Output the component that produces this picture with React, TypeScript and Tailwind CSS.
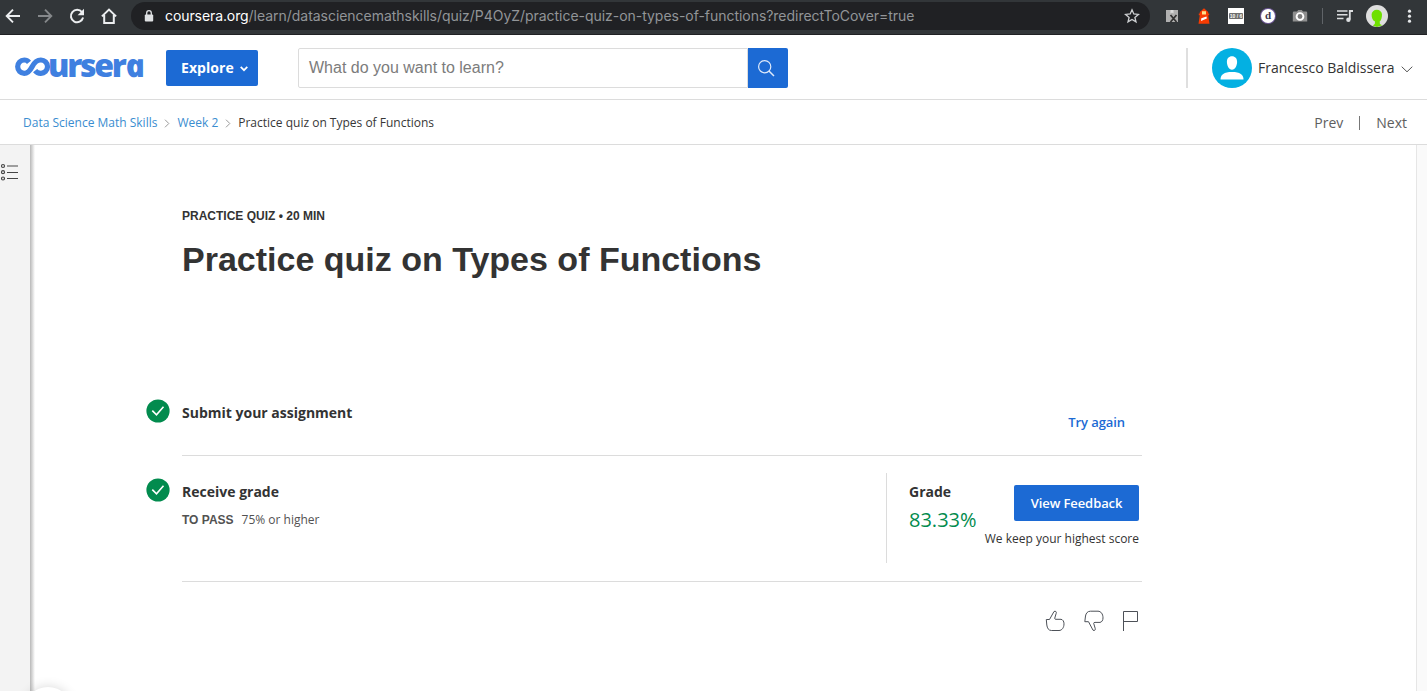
import type { ReactNode } from "react";

const UI = "font-['Open_Sans',sans-serif]";

function Check() {
  return (
    <svg className="block h-6 w-6 shrink-0" viewBox="0 0 24 24">
      <circle cx="12" cy="12" r="11.6" fill="#028b4e" />
      <path d="M6.3 11.6l4.2 4.2 7-8" fill="none" stroke="#fff" strokeWidth="1.6" />
    </svg>
  );
}

function Logo() {
  return (
    <div className="flex h-[26px] w-[128px] shrink-0 items-start text-[#3f80e0]">
      <svg className="mt-[3px] block h-5 w-[37px] shrink-0" viewBox="0 0 37 20">
        <path
          d="M14 5.300C12.700 3.700 11.100 3 9.200 3A6.500 6.500 0 0 0 2.700 9.700a6.500 6.500 0 0 0 6.500 6.600c3.800 0 5.800-2.600 7.900-6.600 2.100-4.100 4.400-6.700 8.700-6.700a6.600 6.600 0 0 1 6.700 6.700 6.600 6.600 0 0 1-6.700 6.600c-2.600 0-4.400-.9-5.700-2.600"
          fill="none"
          stroke="currentColor"
          strokeWidth="5.200"
        />
      </svg>
      <div className="-mt-[11px] -ml-[4px] flex font-['Open_Sans',sans-serif] text-[32px] leading-[44px] font-extrabold tracking-[-2.250px]">
        <span>urser</span>
        <span className="inline-block skew-x-[12deg] italic">a</span>
      </div>
    </div>
  );
}

function Icon({ w = 16, children }: { w?: number; children: ReactNode }) {
  return (
    <svg className="block shrink-0" width={w} height={w} viewBox={`0 0 ${w} ${w}`} fill="none">
      {children}
    </svg>
  );
}

function BrowserBar() {
  return (
    <div className="flex h-[35px] shrink-0 items-start border-b border-[#202124] bg-[#323639]">
      <div className="flex h-8 w-[131px] items-center gap-4 pl-[5px]">
        <Icon>
          <path d="M15 8H2M8 1.7L1.7 8 8 14.3" stroke="#eceef0" strokeWidth="1.9" />
        </Icon>
        <Icon>
          <path d="M1 8h13M8 1.7L14.3 8 8 14.3" stroke="#85888b" strokeWidth="1.9" />
        </Icon>
        <Icon>
          <path d="M13 4.2A6.2 6.2 0 1 0 14.1 9.6" stroke="#eceef0" strokeWidth="2" />
          <path d="M15 .8v6.4H8.6z" fill="#eceef0" />
        </Icon>
        <Icon>
          <path d="M.9 8.4L8 1.6l7.1 6.8M3.2 7v8.1h9.6V7" stroke="#eceef0" strokeWidth="2" />
        </Icon>
      </div>
      <div className="mt-[2px] flex h-7 w-[1019px] shrink-0 items-center rounded-full bg-[#202124] pr-[10px] pl-[13px]">
        <svg className="mr-[11px] block shrink-0" width="10" height="12" viewBox="0 0 10 12">
          <path d="M2.7 5V3a2.3 2.3 0 0 1 4.6 0v2" fill="none" stroke="#dfe1e3" strokeWidth="1.3" />
          <rect x=".8" y="4.6" width="8.4" height="7" rx="1" fill="#dfe1e3" />
        </svg>
        <div className="flex-1 font-['Inter',sans-serif] text-[14px] leading-7 whitespace-nowrap text-[#929598]">
          <span className="tracking-[-0.09px] text-white">coursera.org</span>
          <span className="tracking-[-0.035px]">
            /learn/datasciencemathskills/quiz/P4OyZ/practice-quiz-on-types-of-functions?redirectToCover=true
          </span>
        </div>
        <Icon>
          <path
            d="M8 1.8l1.8 4.2 4.6.4-3.5 3 1.1 4.5L8 11.5 4 13.9l1.1-4.5-3.5-3L6.2 6z"
            stroke="#cfd1d3"
            strokeWidth="1.3"
          />
        </Icon>
      </div>
      <div className="flex h-8 items-center gap-4 pl-[14px]">
        <Icon>
          <path d="M2 2h12v12H2z" fill="#b0b0b0" />
          <path d="M6.5 2h3v3.500l-1.500-1-1.500 1z" fill="#dcdcdc" />
          <path d="M6.500 7l6 7M12.500 7l-6 7" stroke="#333" strokeWidth="1.8" />
        </Icon>
        <Icon>
          <path d="M3.800 4L8 .3 12.200 4v1.500h1V7.300h-1l1.300 8.500h-11l1.300-8.500h-1V5.500h1z" fill="#f63b02" />
          <path d="M6 3.200h4v3.300H6z" fill="#ffe08a" />
          <path d="M5.300 10.300l5.200-1.900.3 2.200-5.800 2.400z" fill="#fff" />
        </Icon>
        <div className="flex h-4 w-4 items-center justify-center bg-white">
          <div className="flex h-[6px] w-[14px] items-center justify-center rounded-[1px] bg-[#6e6e6e] font-['Liberation_Sans',sans-serif] text-[5px] leading-none font-bold whitespace-nowrap text-white">
            10 / 6
          </div>
        </div>
        <div className="flex h-4 w-4 items-center justify-center">
          <div className="h-[14px] w-[14px] rounded-full bg-white text-center font-['Liberation_Serif',serif] text-[11px] leading-[13px] font-bold text-[#3d3650] ring-1 ring-[#6d5795]">
            d
          </div>
        </div>
        <Icon>
          <path d="M2 3.500h3L6.200 2h3.600L11 3.500h3a1.200 1.200 0 0 1 1.200 1.200v8.800H.8V4.700A1.200 1.200 0 0 1 2 3.500z" fill="#8f8f8f" />
          <circle cx="8" cy="8.500" r="3.400" fill="#7d7d7d" stroke="#fff" strokeWidth="1.900" />
        </Icon>
      </div>
      <div className="mt-2 ml-[14px] h-4 w-px bg-[#606468]" />
      <div className="flex h-8 items-center pl-[14px]">
        <Icon>
          <path d="M0 3h10.500M0 6.800h10.500M0 10.500h6.500" stroke="#dcdee0" strokeWidth="1.600" />
          <path d="M16 3h-3.200v8.500" stroke="#dcdee0" strokeWidth="1.800" />
          <circle cx="11.400" cy="11.700" r="2.200" fill="#dcdee0" />
        </Icon>
        <svg className="ml-[13px] block" width="22" height="22" viewBox="0 0 22 22">
          <circle cx="11" cy="11" r="11" fill="#dedede" />
          <path d="M5.600 9.500a5.200 4.700 0 0 1 10.400 0c0 3.300-.8 5.800-2.300 7.100l.2 2.400 2.300 1.200-5.200 1.700-4.200-1.400 2-1.500.2-2.400C6.500 15.500 5.600 12.500 5.600 9.500z" fill="#6fe000" />
        </svg>
        <svg className="ml-[19px] block" width="6" height="16" viewBox="0 0 6 16" fill="#e6e8ea">
          <circle cx="2.500" cy="3.200" r="1.600" />
          <circle cx="2.500" cy="8.200" r="1.600" />
          <circle cx="2.500" cy="13.200" r="1.600" />
        </svg>
      </div>
    </div>
  );
}

function SiteHeader() {
  return (
    <div className="flex h-[65px] shrink-0 items-center border-b border-[#dcdcdc] pl-[15px]">
      <Logo />
      <button className="mt-[1px] ml-[23px] flex h-9 w-[92px] items-center rounded-[2px] bg-[#1c6ad4] pl-[15px] text-[14px] font-bold tracking-[0.05px] text-white">
        Explore
        <svg className="mt-[2px] ml-[6px]" width="8" height="6" viewBox="0 0 8 6">
          <path d="M.7.8L4 4.200 7.300.8" fill="none" stroke="#fff" strokeWidth="1.700" />
        </svg>
      </button>
      <div className="mt-[1px] ml-10 flex h-10 w-[490px]">
        <div className="flex w-[450px] items-center rounded-l-[2px] border border-[#dcdcdc] pl-[10px] font-['Liberation_Sans',sans-serif] text-[16px] text-[#7c7c7c]">
          <span>What do you want to learn?</span>
        </div>
        <div className="w-10 rounded-r-[2px] bg-[#1c6ad4] pt-3 pl-[10px]">
          <svg width="17" height="17" viewBox="0 0 17 17" fill="none" stroke="#dfeafa" strokeWidth="1.200">
            <circle cx="6.700" cy="6.700" r="6.100" />
            <path d="M11 11l5 5" strokeWidth="1.500" />
          </svg>
        </div>
      </div>
      <div className="mt-[1px] ml-[398px] h-10 w-[2px] bg-[#dfdfdf]" />
      <svg className="mt-[1px] ml-6 shrink-0" width="40" height="40" viewBox="0 0 40 40">
        <circle cx="20" cy="20" r="20" fill="#03b0e2" />
        <path d="M20 8.200c3.200 0 5.100 2.200 5.100 5.600 0 3.800-2 7.900-5.100 7.900s-5.100-4.100-5.100-7.900c0-3.400 1.900-5.600 5.100-5.600z" fill="#fff" />
        <path d="M8.500 31.500c0-5 3.500-7.500 11.500-7.500s11.500 2.500 11.500 7.500z" fill="#fff" />
      </svg>
      <span className="mt-[1px] ml-[6px] text-[14px] whitespace-nowrap text-[#333]">Francesco Baldissera</span>
      <svg className="mt-1 ml-[7px] shrink-0" width="12" height="7" viewBox="0 0 12 7">
        <path d="M.7.700L6 5.800 11.300.700" fill="none" stroke="#555" />
      </svg>
    </div>
  );
}

function Chevron() {
  return (
    <svg className="mt-[2px]" width="6" height="9" viewBox="0 0 6 9">
      <path d="M1 .7l3.800 3.800L1 8.300" fill="none" stroke="#999" />
    </svg>
  );
}

function Breadcrumbs() {
  return (
    <div className="flex h-[45px] shrink-0 items-center border-b border-[#dcdcdc] pt-px pr-5 pl-[23px] text-[12px] text-[#373737]">
      <a className="text-[#3a8dd0]">Data Science Math Skills</a>
      <span className="mr-[7px] ml-[7px]"><Chevron /></span>
      <a className="text-[#3a8dd0]">Week 2</a>
      <span className="mr-[7px] ml-[7px]"><Chevron /></span>
      <span>Practice quiz on Types of Functions</span>
      <div className="ml-auto flex items-center text-[14px] text-[#5e5e5e]">
        <span>Prev</span>
        <span className="mx-4 h-[14px] w-px bg-[#777]" />
        <span>Next</span>
      </div>
    </div>
  );
}

function FeedbackIcons() {
  return (
    <div className="flex items-start text-[#4d5158]">
      <svg width="20" height="22" viewBox="0 0 20 22" fill="none" stroke="currentColor" strokeWidth="1">
        <path d="M1.300 9.500H4.500L9 1.500c1.500-.8 2.800.3 2.200 1.800L9.700 8.300c0 .8.500 1 1.300 1h5c1.800.3 3 2 3 4.500 0 4-2.200 6.700-5 6.700H6.500C3.300 20.500 2.300 18 1.800 15z" />
      </svg>
      <svg className="ml-[19px]" width="20" height="22" viewBox="0 0 20 22" fill="none" stroke="currentColor" strokeWidth="1">
        <path d="M.8 11.700H4.500L9 20.200c1.500.8 2.800-.3 2.200-1.800l-1.500-5c0-.8.500-1 1.300-1h5c1.800-.3 3-2 3-4.500 0-4-2.200-6.700-5-6.700H6.500C3.500 1.200 2 3.200 1.500 6z" />
      </svg>
      <svg className="ml-[18px]" width="17" height="22" viewBox="0 0 17 22" fill="none" stroke="currentColor" strokeWidth="1">
        <path d="M1.500 21v-19.500h14v10h-14" />
      </svg>
    </div>
  );
}

function Quiz() {
  return (
    <div className="flex-1 pt-[63px] pl-[112px]">
      <div className="ml-[35px] font-['Liberation_Sans',sans-serif] text-[#333]">
        <div className="text-[12px] leading-4 font-bold whitespace-nowrap">PRACTICE QUIZ • 20 MIN</div>
        <h1 className="mt-[15px] text-[34px] leading-10 font-bold whitespace-nowrap">
          Practice quiz on Types of Functions
        </h1>
      </div>
      <div className="mt-[120px] flex h-[57px] w-[995px]">
        <div className="-ml-px w-9"><Check /></div>
        <div className="flex flex-1 justify-between border-b border-[#dcdcdc]">
          <h2 className="pt-[4px] text-[14px] leading-5 font-bold text-[#333]">Submit your assignment</h2>
          <a className="mr-[17px] pt-[13px] text-[13px] leading-5 font-semibold tracking-[-0.08px] text-[#1c6ad4]">Try again</a>
        </div>
      </div>
      <div className="flex h-[126px] w-[995px]">
        <div className="-ml-px w-9 pt-[22px]"><Check /></div>
        <div className="flex flex-1 border-b border-[#dcdcdc]">
          <div className="w-[704px] shrink-0 pt-[26px]">
            <h2 className="text-[14px] leading-5 font-bold text-[#333]">Receive grade</h2>
            <div className="mt-2 flex gap-[8px] text-[12px] leading-5 text-[#525252]">
              <span className="font-['Liberation_Sans',sans-serif] font-bold">TO PASS</span>
              <span>75% or higher</span>
            </div>
          </div>
          <div className="mt-[17px] flex h-[90px] w-[256px] border-l border-[#dcdcdc] pl-[22px]">
            <div className="w-[75px] shrink-0 pt-[9px]">
              <div className="text-[14px] leading-5 font-bold text-[#333]">Grade</div>
              <div className="mt-[6px] text-[20px] leading-6 text-[#028b4e]">83.33%</div>
            </div>
            <div className="flex w-[155px] shrink-0 flex-col items-end pt-3">
              <button className="h-9 w-[125px] rounded-[2px] bg-[#1c6ad4] pt-[2px] text-[13px] font-semibold tracking-[-0.08px] text-white">
                View Feedback
              </button>
              <div className="mt-[8px] text-[12px] leading-5 whitespace-nowrap text-[#333]">
                We keep your highest score
              </div>
            </div>
          </div>
        </div>
      </div>
      <div className="mt-7 flex w-[992px] justify-end"><FeedbackIcons /></div>
    </div>
  );
}

export default function App() {
  return (
    <div className={`flex h-[691px] w-[1427px] flex-col overflow-hidden bg-white ${UI}`}>
      <BrowserBar />
      <SiteHeader />
      <Breadcrumbs />
      <div className="relative flex min-h-0 flex-1 overflow-hidden">
        <div className="w-[30px] shrink-0 bg-[#f3f3f3] pt-[18px]">
          <svg width="19" height="18" viewBox="0 0 19 18" fill="none" stroke="#444">
            <circle cx="3" cy="3" r="1.500" strokeWidth="1.200" />
            <circle cx="3" cy="9.200" r="1.500" strokeWidth="1.200" />
            <circle cx="3" cy="15.500" r="1.500" strokeWidth="1.200" />
            <path d="M7 3h11" stroke="#888" strokeWidth="1.600" />
            <path d="M7 9.500h11M7 15.500h11" />
          </svg>
        </div>
        <div className="w-[5px] shrink-0 bg-linear-to-r from-[#b8b8b8] to-white" />
        <Quiz />
        <div className="w-[11px] shrink-0 border-l border-[#e6e6e6] bg-[#fafafa]" />
        <div className="absolute top-[542px] left-6 h-12 w-12 rounded-full bg-white shadow-[0_0_12px_rgba(0,0,0,0.16)]" />
      </div>
    </div>
  );
}
